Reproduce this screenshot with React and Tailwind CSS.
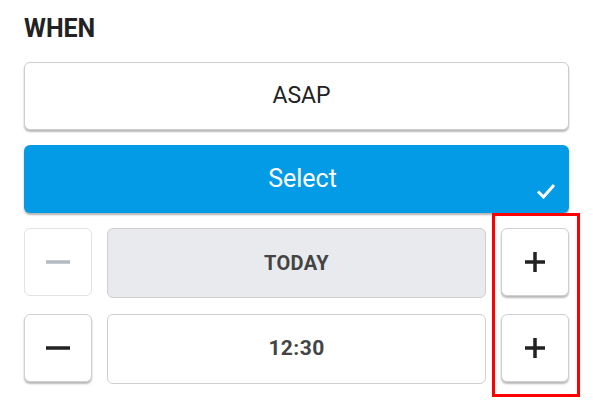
import { useState } from "react";

const font = { fontFamily: "Roboto, 'Liberation Sans', sans-serif" };

const Minus = ({ className }) => (
  <svg width="24" height="4" viewBox="0 0 24 4" className={className}>
    <rect x="0" y="0.25" width="24" height="3.5" fill="currentColor" />
  </svg>
);

const Plus = ({ className }) => (
  <svg width="20" height="20" viewBox="0 0 20 20" className={className}>
    <rect x="0" y="8.25" width="20" height="3.5" fill="currentColor" />
    <rect x="8.25" y="0" width="3.5" height="20" fill="currentColor" />
  </svg>
);

const Stepper = ({ label, disabledMinus, muted, size }) => (
  <div className="grid grid-cols-[68px_1fr_68px] gap-x-[15px] items-start">
    <button
      className={`h-[68px] rounded-md bg-white flex items-center justify-center ${
        disabledMinus
          ? "border border-[#e3e3e3] text-[#b4bac2]"
          : "border border-[#d0d0d0] shadow-[0_2px_2px_rgba(0,0,0,0.28)] text-[#222]"
      }`}
    >
      <Minus />
    </button>
    <div
      className={`h-[70px] rounded-md border border-[#cfcfcf] flex items-center justify-center font-bold tracking-[0.02em] text-[#444] ${size} ${
        muted ? "bg-[#e8eaed]" : "bg-white"
      }`}
    >
      {label}
    </div>
    <button className="h-[68px] rounded-md bg-white border border-[#d0d0d0] shadow-[0_2px_2px_rgba(0,0,0,0.28)] flex items-center justify-center text-[#222]">
      <Plus />
    </button>
  </div>
);

export default function App() {
  const [mode, setMode] = useState("select");

  return (
    <div className="relative w-[593px] h-[410px] bg-white pl-6 pr-6 pt-[14px]" style={font}>
      <h3 className="text-[25px] font-bold text-[#222] leading-[30px]">WHEN</h3>

      <div className="mt-[18px] flex flex-col gap-[15px]">
        <button
          onClick={() => setMode("asap")}
          className="h-[68px] w-full pl-[10px] rounded-md bg-white border border-[#cdcdcd] shadow-[0_2px_2px_rgba(0,0,0,0.28)] text-[23px] text-[#222]"
        >
          ASAP
        </button>

        <button
          onClick={() => setMode("select")}
          className="relative h-[68px] w-full pl-[12px] rounded-md bg-[#039be5] shadow-[0_2px_2px_rgba(0,0,0,0.3)] text-[25px] text-white"
        >
          Select
          {mode === "select" && (
            <svg
              width="20"
              height="16"
              viewBox="0 0 20 16"
              className="absolute right-[13px] bottom-[14px]"
            >
              <path d="M2 8.5 L7.5 14 L18 2" fill="none" stroke="white" strokeWidth="3" />
            </svg>
          )}
        </button>

        <div className="flex flex-col gap-4">
          <Stepper label="TODAY" disabledMinus muted size="text-[20px]" />
          <Stepper label="12:30" size="text-[21px]" />
        </div>
      </div>

      {/* highlight */}
      <div className="absolute left-[492px] top-[213px] w-[88px] h-[184px] border-[3px] border-[#ff0000] pointer-events-none" />
    </div>
  );
}
